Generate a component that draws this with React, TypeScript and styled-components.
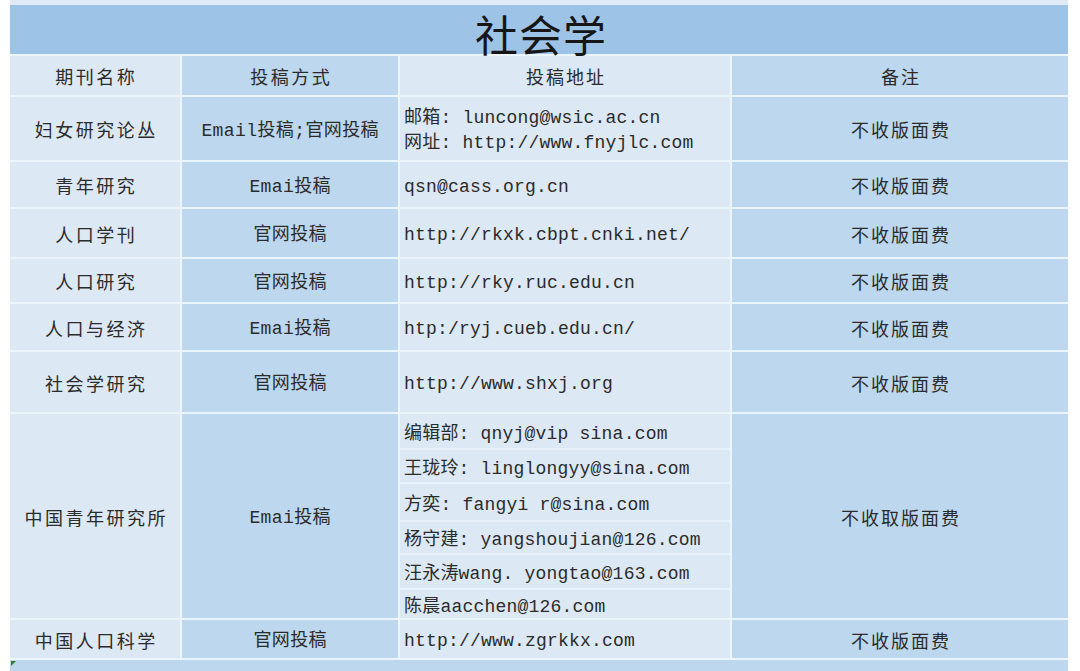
import React from "react";
import styled, { createGlobalStyle } from "styled-components";

const GlobalStyle = createGlobalStyle`
  html, body {
    margin: 0;
    padding: 0;
    background: #ffffff;
  }
  body {
    width: 1080px;
    height: 671px;
    overflow: hidden;
  }
`;

const CJK = `"Noto Sans CJK SC", "Noto Sans", sans-serif`;
const MONO = `"Liberation Mono", "Noto Sans CJK SC", monospace`;

const LIGHT = "#dce8f4";
const DARK = "#bdd7ee";
const LINE = "#edf5fc";

type Tone = "light" | "dark";

const Page = styled.div`
  width: 1080px;
  height: 671px;
  overflow: hidden;
  padding-left: 10px;
  box-sizing: border-box;
`;

const Sheet = styled.div`
  width: 1058px;
  display: grid;
  grid-template-columns: 170px 216px 330px 336px;
  grid-template-rows: 49px 39px 63px 45px 48px 43px 46px 60px 204px 38px 20px;
  gap: 2px;
  background: ${LINE};
  border-top: 5px solid #dfeaf6;
`;

const TitleBand = styled.div`
  grid-column: 1 / -1;
  background: #9dc3e6;
  display: flex;
  justify-content: center;
  align-items: flex-end;
  overflow: visible;
`;

const Title = styled.h1`
  margin: 0 0 -4px 0;
  font-family: ${CJK};
  font-weight: 400;
  font-size: 43px;
  line-height: 50px;
  letter-spacing: 1px;
  color: #161616;
  padding-left: 4px;
`;

const Cell = styled.div<{ $tone: Tone; $mono?: boolean; $left?: boolean; $spacing?: number }>`
  background: ${(p) => (p.$tone === "light" ? LIGHT : DARK)};
  display: flex;
  align-items: center;
  justify-content: ${(p) => (p.$left ? "flex-start" : "center")};
  padding: ${(p) => (p.$mono ? 5 : 2)}px 0 0 ${(p) => (p.$left ? 4 : p.$spacing ?? 0)}px;
  box-sizing: border-box;
  font-family: ${(p) => (p.$mono ? MONO : CJK)};
  font-size: 18px;
  line-height: 25px;
  letter-spacing: ${(p) => p.$spacing ?? 0}px;
  color: #2b2b2b;
  white-space: pre;
  overflow: hidden;
`;

const HeaderCell = styled(Cell)`
  padding-top: 1px;
`;

const Lines = styled.div`
  display: flex;
  flex-direction: column;
`;

const SubStack = styled.div`
  display: flex;
  flex-direction: column;
  gap: 2px;
  background: #e9f2fb;
`;

const SubRow = styled.div<{ $h: number }>`
  height: ${(p) => p.$h}px;
  background: ${LIGHT};
  display: flex;
  align-items: center;
  padding: 5px 0 0 4px;
  box-sizing: border-box;
  font-family: ${MONO};
  font-size: 18px;
  line-height: 24px;
  letter-spacing: 0.2px;
  color: #2b2b2b;
  white-space: pre;
`;

const BottomBand = styled.div`
  grid-column: 1 / -1;
  background: ${DARK};
  position: relative;
  &::before {
    content: "";
    position: absolute;
    left: 1px;
    top: 1px;
    width: 0;
    height: 0;
    border-top: 5px solid #2e7d32;
    border-right: 5px solid transparent;
  }
`;

type Row = {
  name: string;
  method: string;
  address: { kind: "lines"; items: string[] } | { kind: "subs"; items: [string, number][] };
  note: string;
};

const rows: Row[] = [
  {
    name: "妇女研究论丛",
    method: "Email投稿;官网投稿",
    address: { kind: "lines", items: ["邮箱: luncong@wsic.ac.cn", "网址: http://www.fnyjlc.com"] },
    note: "不收版面费",
  },
  { name: "青年研究", method: "Emai投稿", address: { kind: "lines", items: ["qsn@cass.org.cn"] }, note: "不收版面费" },
  { name: "人口学刊", method: "官网投稿", address: { kind: "lines", items: ["http://rkxk.cbpt.cnki.net/"] }, note: "不收版面费" },
  { name: "人口研究", method: "官网投稿", address: { kind: "lines", items: ["http://rky.ruc.edu.cn"] }, note: "不收版面费" },
  { name: "人口与经济", method: "Emai投稿", address: { kind: "lines", items: ["htp:/ryj.cueb.edu.cn/"] }, note: "不收版面费" },
  { name: "社会学研究", method: "官网投稿", address: { kind: "lines", items: ["http://www.shxj.org"] }, note: "不收版面费" },
  {
    name: "中国青年研究所",
    method: "Emai投稿",
    address: {
      kind: "subs",
      items: [
        ["编辑部: qnyj@vip sina.com", 34],
        ["王珑玲: linglongyy@sina.com", 32],
        ["方奕: fangyi r@sina.com", 36],
        ["杨守建: yangshoujian@126.com", 31],
        ["汪永涛wang. yongtao@163.com", 33],
        ["陈晨aacchen@126.com", 28],
      ],
    },
    note: "不收取版面费",
  },
  { name: "中国人口科学", method: "官网投稿", address: { kind: "lines", items: ["http://www.zgrkkx.com"] }, note: "不收版面费" },
];

export default function App() {
  return (
    <>
      <GlobalStyle />
      <Page>
        <Sheet>
          <TitleBand>
            <Title>社会学</Title>
          </TitleBand>

          <HeaderCell $tone="light" $spacing={2.5}>期刊名称</HeaderCell>
          <HeaderCell $tone="dark" $spacing={2.5}>投稿方式</HeaderCell>
          <HeaderCell $tone="light" $spacing={2}>投稿地址</HeaderCell>
          <HeaderCell $tone="dark" $spacing={2}>备注</HeaderCell>

          {rows.map((r) => (
            <React.Fragment key={r.name}>
              <Cell $tone="light" $spacing={2.5}>{r.name}</Cell>
              <Cell $tone="dark" $mono $spacing={0.4}>{r.method}</Cell>
              {r.address.kind === "lines" ? (
                <Cell $tone="light" $mono $left $spacing={0.2}>
                  <Lines>
                    {r.address.items.map((l) => (
                      <span key={l}>{l}</span>
                    ))}
                  </Lines>
                </Cell>
              ) : (
                <SubStack>
                  {r.address.items.map(([t, h]) => (
                    <SubRow key={t} $h={h}>{t}</SubRow>
                  ))}
                </SubStack>
              )}
              <Cell $tone="dark" $spacing={2}>{r.note}</Cell>
            </React.Fragment>
          ))}

          <BottomBand />
        </Sheet>
      </Page>
    </>
  );
}
